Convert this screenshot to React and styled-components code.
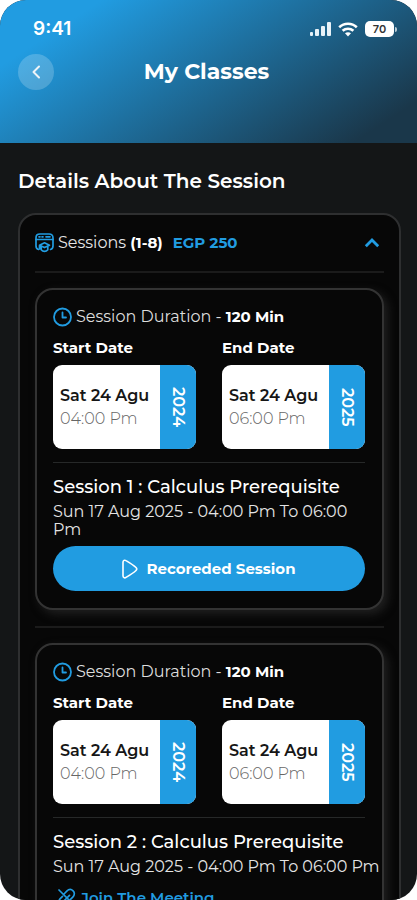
import React, { useState } from "react";
import styled, { createGlobalStyle } from "styled-components";

const blue = "#219ce1";

const GlobalStyle = createGlobalStyle`
  *, *::before, *::after { box-sizing: border-box; }
  body { margin: 0; background: #fff; font-family: Montserrat, Inter, sans-serif; }
  button { font: inherit; border: 0; cursor: pointer; }
  h1, h2, h3, p { margin: 0; }
`;

const Phone = styled.div`
  height: 100vh;
  display: flex;
  flex-direction: column;
  overflow: hidden;
  border-radius: 26px;
  background: #141617;
  color: #fff;
`;

const Header = styled.header`
  flex: none;
  height: 143px;
  padding: 14px 18px 0;
  background: linear-gradient(147deg, #219ce1 16%, #1a374a 90%);
`;

const StatusBar = styled.div`
  display: flex;
  align-items: center;
  justify-content: space-between;
  height: 30px;
  padding: 0 2px 0 15px;
`;

const Clock = styled.span`
  font: 600 19px/24px Inter, sans-serif;
`;

const StatusIcons = styled.div`
  display: flex;
  align-items: center;
  gap: 7px;
  svg { display: block; }
`;

const Battery = styled.span`
  display: flex;
  align-items: center;
  gap: 1px;
  &::after {
    content: "";
    width: 2px;
    height: 5px;
    border-radius: 0 2px 2px 0;
    background: #b9cbd6;
  }
`;

const Level = styled.span`
  width: 29px;
  border-radius: 5px;
  background: #fff;
  color: #333;
  font: 600 11px/16px Inter, sans-serif;
  text-align: center;
`;

const TitleBar = styled.div`
  display: grid;
  grid-template-columns: 36px 1fr 36px;
  align-items: center;
  margin-top: 10px;
`;

const BackButton = styled.button`
  display: grid;
  place-items: center;
  width: 36px;
  height: 36px;
  padding: 0;
  border-radius: 50%;
  background: rgba(255, 255, 255, 0.2);
  color: #fff;
`;

const Title = styled.h1`
  font-size: 22px;
  line-height: 28px;
  font-weight: 700;
  text-align: center;
  padding-right: 4px;
`;

const Main = styled.main`
  flex: 1;
  min-height: 0;
  overflow-y: auto;
  scrollbar-width: none;
  padding: 25px 16px 26px 18px;
`;

const Heading = styled.h2`
  font-size: 20px;
  line-height: 26px;
  font-weight: 600;
`;

const Panel = styled.section`
  margin-top: 19px;
  padding: 0 15px 16px;
  border: 2px solid #2e2f30;
  border-radius: 18px;
  background: #070707;
`;

const Toggle = styled.button`
  display: flex;
  align-items: center;
  gap: 4px;
  width: 100%;
  height: 56px;
  padding: 0 4px 0 0;
  background: none;
  color: #e4e4e4;
  font-size: 16px;
  line-height: 20px;
  svg { flex: none; }
  svg:last-child { margin-left: auto; }
`;

const Strong = styled.b`
  font-size: 15px;
  font-weight: 700;
  color: #fff;
`;

const Price = styled.span`
  margin-left: 6px;
  font-size: 15px;
  font-weight: 700;
  color: ${blue};
`;

const Rule = styled.hr`
  height: ${(p) => (p.$thin ? 1 : 2)}px;
  margin: ${(p) => (p.$thin ? "13px 0 12px" : "0 0 15px")};
  border: 0;
  background: ${(p) => (p.$thin ? "#262828" : "#1b1b1b")};
`;

const Card = styled.article`
  margin-bottom: 16px;
  padding: 16px 17px 17px 16px;
  border: 2px solid #333;
  border-radius: 18px;
  background: #070707;
  box-shadow: 4px 4px 10px #202020;
`;

const Duration = styled.p`
  display: flex;
  align-items: center;
  gap: 4px;
  font-size: 16px;
  line-height: 22px;
  color: #ddd;
`;

const Dates = styled.div`
  display: grid;
  grid-template-columns: 1fr 1fr;
  gap: 26px;
  margin-top: 10px;
`;

const DateLabel = styled.h3`
  font-size: 15px;
  line-height: 20px;
  font-weight: 700;
`;

const DateBox = styled.div`
  display: grid;
  grid-template-columns: 1fr 36px;
  height: 84px;
  margin-top: 7px;
  overflow: hidden;
  border-radius: 9px;
  background: #fff;
`;

const DateText = styled.div`
  display: flex;
  flex-direction: column;
  justify-content: center;
  gap: 3px;
  padding-left: 7px;
  font-size: 16px;
  line-height: 20px;
  white-space: nowrap;
`;

const Day = styled.span`
  font-weight: 600;
  color: #161616;
`;

const Time = styled.span`
  font-weight: 300;
  color: #666;
`;

const Year = styled.div`
  display: grid;
  place-items: center;
  writing-mode: vertical-rl;
  background: ${blue};
  color: #fff;
  font-size: 16px;
  font-weight: 600;
`;

const SessionTitle = styled.h3`
  font-size: 18px;
  line-height: 24px;
  font-weight: 500;
`;

const Schedule = styled.p`
  margin-top: 4px;
  font-size: 16px;
  line-height: 18px;
  color: #e4e4e4;
  white-space: ${(p) => (p.$oneLine ? "nowrap" : "normal")};
`;

const PlayButton = styled.button`
  display: flex;
  align-items: center;
  justify-content: center;
  gap: 8px;
  width: 100%;
  height: 45px;
  margin-top: 7px;
  border-radius: 23px;
  background: ${blue};
  color: #fff;
  font-size: 15px;
  font-weight: 700;
`;

const JoinLink = styled.a`
  display: inline-flex;
  align-items: center;
  gap: 4px;
  margin: 11px 0 0 4px;
  color: ${blue};
  font-size: 15px;
  line-height: 22px;
  font-weight: 600;
  text-decoration: none;
`;

const Signal = () => (
  <svg width="22" height="15" viewBox="0 0 22 15" fill="#e8f2f8" aria-hidden="true">
    <rect x="1" y="10" width="3" height="4" rx="1" />
    <rect x="6" y="7" width="4" height="7" rx="1" />
    <rect x="12" y="4" width="4" height="10" rx="1" />
    <rect x="18" y="0" width="4" height="14" rx="1" />
  </svg>
);

const Wifi = () => (
  <svg width="20" height="15" viewBox="0 0 20 15" fill="none" stroke="#fff" strokeWidth="2.600" aria-hidden="true">
    <path d="M1.200 5.300C6.200.6 13.800.6 18.800 5.300" />
    <path d="M4.600 8.800c3.100-2.800 7.700-2.800 10.800 0" />
    <path d="M10 14.500l-3-3.200c1.700-1.500 4.300-1.500 6 0z" fill="#fff" stroke="none" />
  </svg>
);

const Back = () => (
  <svg width="18" height="18" viewBox="0 0 18 18" fill="none" stroke="#eef4f8" strokeWidth="2" strokeLinecap="round" strokeLinejoin="round" aria-hidden="true">
    <path d="M12 3.500L6.500 9l5.500 5.500" />
  </svg>
);

const SessionsIcon = () => (
  <svg width="19" height="20" viewBox="0 0 19 20" fill="none" stroke={blue} strokeWidth="1.700" strokeLinecap="round" strokeLinejoin="round" aria-hidden="true">
    <path d="M3.500 16.500C1.800 16 1 15 1 13V5c0-2.800 1.200-4 4-4h9c2.800 0 4 1.200 4 4v8c0 2-.8 3-2.500 3.500" />
    <path d="M1 6.500h17M4 3.800h1M7 3.800h1M11 3.800h4" />
    <path d="M4.500 12.200l5-2.400 5 2.400-5 2.400zM6.200 13.500v3.300c1.800 2.200 4.800 2.200 6.600 0v-3.300M4.500 12.500V16" />
  </svg>
);

const ClockIcon = () => (
  <svg width="19" height="20" viewBox="0 0 19 20" fill="none" stroke={blue} strokeWidth="1.800" strokeLinecap="round" strokeLinejoin="round" aria-hidden="true">
    <circle cx="9.500" cy="10" r="8.500" />
    <path d="M9.500 5.500V10.500h3.500" />
  </svg>
);

const Chevron = ({ open }) => (
  <svg width="16" height="12" viewBox="0 0 16 12" fill="none" stroke={blue} strokeWidth="2.800" aria-hidden="true">
    <path d={open ? "M1.800 9.200L8 3l6.200 6.200" : "M1.800 3L8 9.200 14.200 3"} />
  </svg>
);

const Play = () => (
  <svg width="16" height="20" viewBox="0 0 16 20" fill="none" stroke="#fff" strokeWidth="1.600" strokeLinejoin="round" aria-hidden="true">
    <path d="M1 3.200v13.600c0 1.800 1.600 2.600 3 1.600 3.400-2 7.600-4.600 10-6.900 1-1 1-2 0-3C11.600 6.200 7.400 3.600 4 1.600c-1.400-.9-3-.2-3 1.600z" />
  </svg>
);

const LinkIcon = () => (
  <svg width="20" height="20" viewBox="0 0 20 20" fill="none" stroke={blue} strokeWidth="1.700" strokeLinecap="round" strokeLinejoin="round" aria-hidden="true">
    <path d="M2 2l16 16M7.500 5.500l2.300-2.300c2-2 4.600-2 6.300-.4 1.700 1.700 1.700 4.300-.3 6.300l-2.300 2.300M11.500 14.200l-2 2c-2 2-4.700 2-6.300.4-1.700-1.700-1.700-4.300.3-6.300l2-2M7.300 12.500l5.200-5.200" />
  </svg>
);

const sessions = [
  { title: "Session 1 : Calculus Prerequisite", recorded: true },
  { title: "Session 2 : Calculus Prerequisite", recorded: false },
];

const DateColumn = ({ label, time, year }) => (
  <div>
    <DateLabel>{label}</DateLabel>
    <DateBox>
      <DateText>
        <Day>Sat 24 Agu</Day>
        <Time>{time}</Time>
      </DateText>
      <Year>{year}</Year>
    </DateBox>
  </div>
);

const SessionCard = ({ title, recorded }) => (
  <Card>
    <Duration>
      <ClockIcon />
      <span>Session Duration - <Strong>120 Min</Strong></span>
    </Duration>
    <Dates>
      <DateColumn label="Start Date" time="04:00 Pm" year="2024" />
      <DateColumn label="End Date" time="06:00 Pm" year="2025" />
    </Dates>
    <Rule $thin />
    <SessionTitle>{title}</SessionTitle>
    <Schedule $oneLine={!recorded}>Sun 17 Aug 2025 - 04:00 Pm To 06:00 Pm</Schedule>
    {recorded ? (
      <PlayButton type="button"><Play />Recoreded Session</PlayButton>
    ) : (
      <JoinLink href="#meeting"><LinkIcon />Join The Meeting</JoinLink>
    )}
  </Card>
);

export default function App() {
  const [open, setOpen] = useState(true);
  return (
    <>
      <GlobalStyle />
      <Phone>
        <Header>
          <StatusBar>
            <Clock>9:41</Clock>
            <StatusIcons>
              <Signal />
              <Wifi />
              <Battery><Level>70</Level></Battery>
            </StatusIcons>
          </StatusBar>
          <TitleBar>
            <BackButton type="button" aria-label="Back"><Back /></BackButton>
            <Title>My Classes</Title>
          </TitleBar>
        </Header>
        <Main>
          <Heading>Details About The Session</Heading>
          <Panel>
            <Toggle type="button" aria-expanded={open} onClick={() => setOpen(!open)}>
              <SessionsIcon />
              <span>Sessions <Strong>(1-8)</Strong></span>
              <Price>EGP 250</Price>
              <Chevron open={open} />
            </Toggle>
            {open && sessions.map((session) => (
              <React.Fragment key={session.title}>
                <Rule />
                <SessionCard {...session} />
              </React.Fragment>
            ))}
          </Panel>
        </Main>
      </Phone>
    </>
  );
}
